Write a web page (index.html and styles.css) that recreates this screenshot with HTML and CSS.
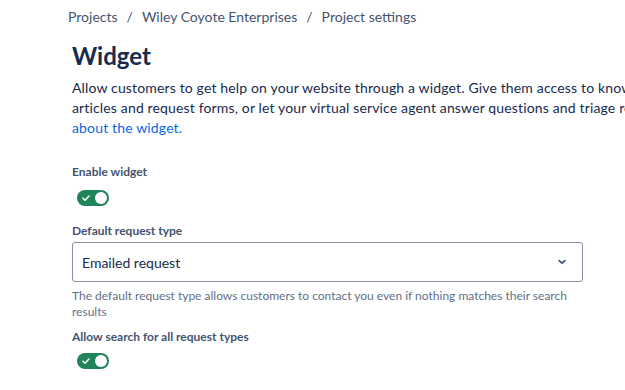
FILE: index.html
```html
<!DOCTYPE html>
<html lang="en">
<head>
    <meta charset="UTF-8">
    <title>Widget - Project settings</title>
    <link rel="stylesheet" href="styles.css">
</head>
<body>
    <!-- Breadcrumbs -->
    <nav class="breadcrumbs">
        <a href="#">Projects</a>
        <span class="sep">/</span>
        <a href="#">Wiley Coyote Enterprises</a>
        <span class="sep">/</span>
        <a href="#">Project settings</a>
    </nav>

    <main class="content">
        <h1>Widget</h1>
        <p class="intro">
            Allow customers to get help on your website through a widget. Give them access to knowledge base<br>
            articles and request forms, or let your virtual service agent answer questions and triage requests. Learn more<br>
            <a href="#">about the widget.</a>
        </p>

        <div class="field field-toggle">
            <label class="label">Enable widget</label>
            <span class="toggle">
                <svg class="check" width="10" height="10" viewBox="0 0 10 10"><path d="M2 5.2l2 2 4-4.2" fill="none" stroke="#fff" stroke-width="1.6" stroke-linecap="round" stroke-linejoin="round"/></svg>
                <span class="knob"></span>
            </span>
        </div>

        <div class="field field-select">
            <label class="label">Default request type</label>
            <div class="select">
                <span>Emailed request</span>
                <svg width="12" height="12" viewBox="0 0 12 12"><path d="M3.2 4.6L6 7.2l2.8-2.6" fill="none" stroke="#44546f" stroke-width="1.8" stroke-linecap="round" stroke-linejoin="round"/></svg>
            </div>
            <p class="help">The default request type allows customers to contact you even if nothing matches their search results</p>
        </div>

        <div class="field field-toggle last">
            <label class="label">Allow search for all request types</label>
            <span class="toggle">
                <svg class="check" width="10" height="10" viewBox="0 0 10 10"><path d="M2 5.2l2 2 4-4.2" fill="none" stroke="#fff" stroke-width="1.6" stroke-linecap="round" stroke-linejoin="round"/></svg>
                <span class="knob"></span>
            </span>
        </div>
    </main>
</body>
</html>
```

FILE: styles.css
```css
html, body {
    overflow: hidden;
}

body {
    margin: 0;
    font-family: "Lato", "Open Sans", sans-serif;
    color: #172b4d;
    background: #ffffff;
}

/* Breadcrumbs */
.breadcrumbs {
    display: flex;
    align-items: center;
    gap: 9px;
    padding: 4px 0 0 68px;
    height: 24px;
    font-size: 14px;
    white-space: nowrap;
}

.breadcrumbs a,
.breadcrumbs .sep {
    color: #44546f;
    text-decoration: none;
}

/* Main content */
.content {
    width: 800px;
    padding: 14px 0 0 72px;
}

.content h1 {
    margin: 0;
    font-size: 24px;
    line-height: 28px;
    font-weight: 700;
    color: #172b4d;
}

.intro {
    margin: 8px 0 0;
    font-size: 14px;
    line-height: 20px;
    letter-spacing: 0.15px;
    color: #172b4d;
    white-space: nowrap;
}

.intro a {
    color: #0c66e4;
    text-decoration: none;
}

.field {
    display: flex;
    flex-direction: column;
    align-items: flex-start;
}

.label {
    font-size: 12px;
    line-height: 16px;
    font-weight: 700;
    color: #44546f;
}

.field-toggle .label {
    margin-bottom: 10px;
}

.field-select .label {
    margin-bottom: 3px;
}

.field-toggle:first-of-type {
    margin-top: 26px;
}

.field-select {
    margin-top: 17px;
}

.field.last {
    margin-top: 9px;
}

.field.last .label {
    margin-bottom: 8px;
}

/* Toggle */
.toggle {
    position: relative;
    display: flex;
    align-items: center;
    width: 32px;
    height: 16px;
    margin-left: 5px;
    border-radius: 8px;
    background: #1f845a;
}

.toggle .check {
    margin-left: 4px;
}

.toggle .knob {
    position: absolute;
    right: 2px;
    top: 2px;
    width: 12px;
    height: 12px;
    border-radius: 50%;
    background: #ffffff;
}

/* Select */
.select {
    box-sizing: border-box;
    display: flex;
    align-items: center;
    justify-content: space-between;
    width: 511px;
    height: 40px;
    padding: 0 14px 0 9px;
    border: 1px solid #8590a2;
    border-radius: 3px;
    font-size: 14px;
    color: #172b4d;
}

.help {
    margin: 6px 0 0;
    width: 511px;
    font-size: 12px;
    line-height: 16px;
    color: #626f86;
}
```
